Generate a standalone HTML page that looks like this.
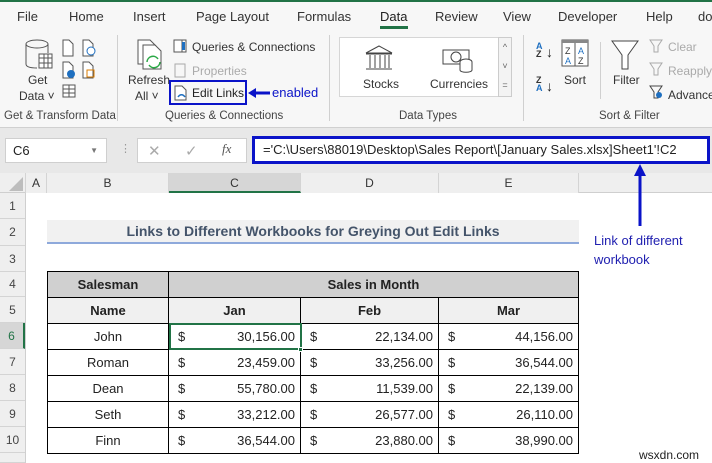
<!DOCTYPE html><html><head><style>
*{margin:0;padding:0;box-sizing:border-box}
body{width:712px;height:463px;overflow:hidden;background:#fff;font-family:"Liberation Sans",sans-serif;position:relative;color:#222}
.a{position:absolute;white-space:nowrap}
.tab{position:absolute;top:9px;font-size:13px;color:#333}
.rb{font-size:12px;color:#333}
.gl{position:absolute;top:110px;font-size:11.5px;color:#444}
.sep{position:absolute;top:35px;width:1px;height:86px;background:#d0d0d0}
.rh{position:absolute;left:0;width:25px;text-align:center;font-size:12px;color:#444;border-bottom:1px solid #d4d4d4;background:#efefef}
.ch{position:absolute;top:173px;height:20px;font-size:12px;color:#333;text-align:center;line-height:20px;border-right:1px solid #d4d4d4;background:#efefef}
.c{position:absolute;font-size:13px;line-height:26px;border-right:1px solid #000;border-bottom:1px solid #000}
.cn{text-align:center}
.num .d{position:absolute;left:9px}
.num .v{position:absolute;right:5px}
</style></head><body>
<div class="a" style="left:0;top:0;width:712px;height:2px;background:#217346"></div>
<div class="a" style="left:0;top:2px;width:712px;height:125px;background:#f7f7f7"></div>
<span class="tab" style="left:17px">File</span>
<span class="tab" style="left:69px">Home</span>
<span class="tab" style="left:133px">Insert</span>
<span class="tab" style="left:196px">Page Layout</span>
<span class="tab" style="left:297px">Formulas</span>
<span class="tab" style="left:380px;color:#222">Data</span>
<div class="a" style="left:380px;top:26px;width:28px;height:3px;background:#217346"></div>
<span class="tab" style="left:435px">Review</span>
<span class="tab" style="left:503px">View</span>
<span class="tab" style="left:558px">Developer</span>
<span class="tab" style="left:646px">Help</span>
<span class="tab" style="left:698px">do</span>
<!-- Get data -->
<svg class="a" style="left:24px;top:38px" width="30" height="34"><ellipse cx="13" cy="6" rx="11" ry="4" fill="none" stroke="#555"/><path d="M2 6v20c0 3 5 4 11 4M24 6v9" fill="none" stroke="#555"/><rect x="15" y="16" width="13" height="14" fill="#fff" stroke="#555"/><path d="M15 20h13M15 25h13M20 16v14M24 16v14" stroke="#555"/></svg>
<span class="a rb" style="left:28px;top:73px">Get</span>
<span class="a rb" style="left:19px;top:89px">Data ˅</span>
<svg class="a" style="left:60px;top:38px" width="44" height="64"><path d="M3 2h6l4 4v12H3z M23 2h6l4 4v12H23z M3 24h6l4 4v12H3z M23 24h6l4 4v12H23z" fill="#fff" stroke="#555"/><circle cx="31" cy="13" r="4" fill="#fff" stroke="#1e6fc0"/><circle cx="11" cy="36" r="4" fill="#1e6fc0"/><rect x="27" y="32" width="7" height="7" fill="none" stroke="#d97b00"/><rect x="3" y="47" width="12" height="12" fill="#fff" stroke="#555"/><path d="M3 51h12M3 55h12M9 47v12" stroke="#555"/></svg>
<span class="gl" style="left:4px">Get &amp; Transform Data</span>
<div class="sep" style="left:117px"></div>
<!-- Refresh -->
<svg class="a" style="left:135px;top:38px" width="32" height="34"><path d="M3 2h12l6 6v18H3z" fill="#fff" stroke="#555"/><path d="M8 7h12l6 6v18H8z" fill="#fff" stroke="#555"/><path d="M12 24a6 6 0 0 1 11-3M25 24a6 6 0 0 1-11 3" fill="none" stroke="#2aa845" stroke-width="1.5"/></svg>
<span class="a rb" style="left:128px;top:73px">Refresh</span>
<span class="a rb" style="left:135px;top:89px">All ˅</span>
<svg class="a" style="left:173px;top:39px" width="14" height="14"><rect x="1" y="1" width="12" height="12" fill="#fff" stroke="#555"/><path d="M9 1v12" stroke="#555"/><rect x="9" y="3" width="3" height="8" fill="#1e6fc0"/></svg>
<span class="a rb" style="left:192px;top:40px">Queries &amp; Connections</span>
<svg class="a" style="left:174px;top:63px" width="12" height="15"><rect x="1" y="1" width="10" height="13" fill="none" stroke="#aaa"/></svg>
<span class="a rb" style="left:192px;top:64px;color:#aaa">Properties</span>
<div class="a" style="left:169px;top:80px;width:78px;height:25px;border:2.5px solid #0a13c8"></div>
<svg class="a" style="left:174px;top:85px" width="14" height="16"><path d="M1 1h7l4 4v10H1z" fill="#fff" stroke="#555"/><path d="M4 12c2-3 5-3 7 0" fill="none" stroke="#1e6fc0" stroke-width="1.5"/></svg>
<span class="a rb" style="left:192px;top:86px;color:#222">Edit Links</span>
<svg class="a" style="left:248px;top:87px" width="22" height="12"><path d="M22 6H6" stroke="#0a13c8" stroke-width="3"/><path d="M0 6l8-5v10z" fill="#0a13c8"/></svg>
<span class="a" style="left:272px;top:85px;font-size:13px;color:#0a13c8">enabled</span>
<span class="gl" style="left:165px">Queries &amp; Connections</span>
<div class="sep" style="left:329px"></div>
<!-- data types -->
<div class="a" style="left:339px;top:37px;width:163px;height:60px;background:#fff;border:1px solid #d6d6d6"></div>
<div class="a" style="left:498px;top:37px;width:14px;height:60px;background:#f3f3f3;border:1px solid #ccc;font-size:9px;text-align:center;color:#666;line-height:19px">^<br>˅<br>=</div>
<svg class="a" style="left:364px;top:45px" width="30" height="26"><path d="M2 8L15 1l13 7z" fill="none" stroke="#444"/><path d="M2 9h26M2 24h26M6 10v13M11 10v13M16 10v13M21 10v13M25 10v13" stroke="#444"/></svg>
<span class="a rb" style="left:363px;top:77px">Stocks</span>
<svg class="a" style="left:442px;top:44px" width="32" height="30"><rect x="1" y="6" width="26" height="14" fill="none" stroke="#444"/><circle cx="14" cy="13" r="5" fill="none" stroke="#444"/><ellipse cx="24" cy="18" rx="6" ry="3" fill="#fff" stroke="#444"/><path d="M18 18v8c0 3 12 3 12 0v-8" fill="#fff" stroke="#444"/></svg>
<span class="a rb" style="left:430px;top:77px">Currencies</span>
<span class="gl" style="left:399px">Data Types</span>
<div class="sep" style="left:523px"></div>
<span class="a" style="left:536px;top:42px;font-size:9px;line-height:8px;color:#1e6fc0;font-weight:bold">A<br><span style="color:#333">Z</span></span><span class="a" style="left:546px;top:44px;font-size:14px">↓</span>
<span class="a" style="left:536px;top:76px;font-size:9px;line-height:8px;color:#333;font-weight:bold">Z<br><span style="color:#1e6fc0">A</span></span><span class="a" style="left:546px;top:78px;font-size:14px">↓</span>
<svg class="a" style="left:561px;top:39px" width="28" height="28"><rect x="1" y="1" width="26" height="26" fill="#fff" stroke="#555"/><rect x="1" y="1" width="26" height="3" fill="#888"/><path d="M14 4v23" stroke="#555"/><text x="4" y="15" font-size="9" fill="#333" font-family="Liberation Sans">Z</text><text x="17" y="15" font-size="9" fill="#1e6fc0" font-family="Liberation Sans">A</text><text x="4" y="25" font-size="9" fill="#1e6fc0" font-family="Liberation Sans">A</text><text x="17" y="25" font-size="9" fill="#333" font-family="Liberation Sans">Z</text></svg>
<span class="a rb" style="left:564px;top:73px">Sort</span>
<div class="a" style="left:600px;top:42px;width:1px;height:57px;background:#d0d0d0"></div>
<svg class="a" style="left:610px;top:39px" width="30" height="32"><path d="M2 2h26L18 16v14h-6V16z" fill="#fff" stroke="#444"/></svg>
<span class="a rb" style="left:613px;top:73px">Filter</span>
<svg class="a" style="left:649px;top:39px" width="14" height="62"><path d="M1 1h12L9 7v6H5V7z M1 24h12L9 30v6H5v-6z" fill="none" stroke="#aaa"/><path d="M1 47h12L9 53v6H5v-6z" fill="none" stroke="#444"/><circle cx="10" cy="56" r="3" fill="#1e6fc0"/></svg>
<span class="a rb" style="left:668px;top:40px;color:#aaa">Clear</span>
<span class="a rb" style="left:668px;top:64px;color:#aaa">Reapply</span>
<span class="a rb" style="left:668px;top:88px">Advance</span>
<span class="gl" style="left:599px">Sort &amp; Filter</span>
<div class="a" style="left:0;top:127px;width:712px;height:46px;background:#e8e8e8"></div>
<div class="a" style="left:0;top:127px;width:712px;height:1px;background:#d0d0d0"></div>
<div class="a" style="left:5px;top:138px;width:102px;height:25px;background:#fff;border:1px solid #cfcfcf;font-size:13px;line-height:23px;padding-left:7px">C6<span style="position:absolute;right:8px;font-size:8px;color:#777">▼</span></div>
<span class="a" style="left:120px;top:142px;color:#999;font-size:11px">⋮</span>
<div class="a" style="left:137px;top:138px;width:110px;height:25px;background:#fff;border:1px solid #cfcfcf"></div>
<span class="a" style="left:148px;top:142px;color:#aaa;font-size:15px">✕</span>
<span class="a" style="left:185px;top:142px;color:#aaa;font-size:15px">✓</span>
<span class="a" style="left:222px;top:141px;color:#555;font-size:13px;font-family:'Liberation Serif',serif;font-style:italic">fx</span>
<div class="a" style="left:252px;top:136px;width:458px;height:28px;background:#fff;border:3px solid #0a13c8;font-size:13px;line-height:22px;padding-left:8px;color:#222">='C:\Users\88019\Desktop\Sales Report\[January Sales.xlsx]Sheet1'!C2</div>
<!-- column headers -->
<div class="a" style="left:0;top:173px;width:712px;height:20px;background:#efefef;border-bottom:1px solid #cfcfcf"></div>
<svg class="a" style="left:9px;top:177px" width="14" height="14"><path d="M14 0v14H0z" fill="#bdbdbd"/></svg>
<div class="ch" style="left:25px;width:22px;border-left:1px solid #d4d4d4">A</div>
<div class="ch" style="left:47px;width:122px">B</div>
<div class="ch" style="left:169px;width:132px;background:#d6d6d6;border-bottom:2px solid #217346">C</div>
<div class="ch" style="left:301px;width:138px">D</div>
<div class="ch" style="left:439px;width:140px">E</div>
<div class="a" style="left:25px;top:193px;width:1px;height:270px;background:#cfcfcf"></div>
<div class="rh" style="top:193px;height:26px;line-height:26px">1</div>
<div class="rh" style="top:219px;height:27px;line-height:27px">2</div>
<div class="rh" style="top:246px;height:26px;line-height:26px">3</div>
<div class="rh" style="top:272px;height:25px;line-height:25px">4</div>
<div class="rh" style="top:297px;height:26px;line-height:26px">5</div>
<div class="rh" style="top:323px;height:26px;line-height:26px;background:#d6d6d6;border-right:2px solid #217346;color:#217346">6</div>
<div class="rh" style="top:349px;height:26px;line-height:26px">7</div>
<div class="rh" style="top:375px;height:26px;line-height:26px">8</div>
<div class="rh" style="top:401px;height:26px;line-height:26px">9</div>
<div class="rh" style="top:427px;height:26px;line-height:26px">10</div>
<div class="rh" style="top:453px;height:10px"></div>
<!-- title -->
<div class="a" style="left:47px;top:220px;width:532px;height:24px;background:#f1f1f1;border-bottom:2px solid #8ea9db;text-align:center;font-weight:bold;font-size:14px;line-height:23px;color:#44546a">Links to Different Workbooks for Greying Out Edit Links</div>
<!-- arrow + note -->
<svg class="a" style="left:633px;top:164px" width="14" height="62"><path d="M7 62V10" stroke="#0a13c8" stroke-width="3"/><path d="M7 0l6 12H1z" fill="#0a13c8"/></svg>
<span class="a" style="left:594px;top:231px;font-size:13px;color:#2020b0;line-height:19px">Link of different<br>workbook</span>
<!-- table -->
<div class="a" style="left:47px;top:271px;width:532px;height:183px;border-left:1px solid #000;border-top:1px solid #000"></div>
<div class="c cn" style="left:48px;top:272px;width:121px;height:26px;background:#d0d0d0;font-weight:bold;line-height:25px">Salesman</div>
<div class="c cn" style="left:169px;top:272px;width:410px;height:26px;background:#d0d0d0;font-weight:bold;line-height:25px">Sales in Month</div>
<div class="c cn" style="left:48px;top:298px;width:121px;height:26px;background:#f0f0f0;font-weight:bold">Name</div>
<div class="c cn" style="left:169px;top:298px;width:132px;height:26px;background:#f0f0f0;font-weight:bold">Jan</div>
<div class="c cn" style="left:301px;top:298px;width:138px;height:26px;background:#f0f0f0;font-weight:bold">Feb</div>
<div class="c cn" style="left:439px;top:298px;width:140px;height:26px;background:#f0f0f0;font-weight:bold">Mar</div>

<div class="c cn" style="left:48px;top:324px;width:121px;height:26px">John</div>
<div class="c num" style="left:169px;top:324px;width:132px;height:26px"><span class="d">$</span><span class="v">30,156.00</span></div>
<div class="c num" style="left:301px;top:324px;width:138px;height:26px"><span class="d">$</span><span class="v">22,134.00</span></div>
<div class="c num" style="left:439px;top:324px;width:140px;height:26px"><span class="d">$</span><span class="v">44,156.00</span></div>

<div class="c cn" style="left:48px;top:350px;width:121px;height:26px">Roman</div>
<div class="c num" style="left:169px;top:350px;width:132px;height:26px"><span class="d">$</span><span class="v">23,459.00</span></div>
<div class="c num" style="left:301px;top:350px;width:138px;height:26px"><span class="d">$</span><span class="v">33,256.00</span></div>
<div class="c num" style="left:439px;top:350px;width:140px;height:26px"><span class="d">$</span><span class="v">36,544.00</span></div>

<div class="c cn" style="left:48px;top:376px;width:121px;height:26px">Dean</div>
<div class="c num" style="left:169px;top:376px;width:132px;height:26px"><span class="d">$</span><span class="v">55,780.00</span></div>
<div class="c num" style="left:301px;top:376px;width:138px;height:26px"><span class="d">$</span><span class="v">11,539.00</span></div>
<div class="c num" style="left:439px;top:376px;width:140px;height:26px"><span class="d">$</span><span class="v">22,139.00</span></div>

<div class="c cn" style="left:48px;top:402px;width:121px;height:26px">Seth</div>
<div class="c num" style="left:169px;top:402px;width:132px;height:26px"><span class="d">$</span><span class="v">33,212.00</span></div>
<div class="c num" style="left:301px;top:402px;width:138px;height:26px"><span class="d">$</span><span class="v">26,577.00</span></div>
<div class="c num" style="left:439px;top:402px;width:140px;height:26px"><span class="d">$</span><span class="v">26,110.00</span></div>

<div class="c cn" style="left:48px;top:428px;width:121px;height:26px">Finn</div>
<div class="c num" style="left:169px;top:428px;width:132px;height:26px"><span class="d">$</span><span class="v">36,544.00</span></div>
<div class="c num" style="left:301px;top:428px;width:138px;height:26px"><span class="d">$</span><span class="v">23,880.00</span></div>
<div class="c num" style="left:439px;top:428px;width:140px;height:26px"><span class="d">$</span><span class="v">38,990.00</span></div>

<div class="a" style="left:169px;top:323px;width:133px;height:27px;border:2px solid #217346"></div>
<div class="a" style="left:298px;top:347px;width:5px;height:5px;background:#217346;border:1px solid #fff"></div>
<span class="a" style="left:639px;top:448px;font-size:12px;color:#222">wsxdn.com</span>
</body></html>
